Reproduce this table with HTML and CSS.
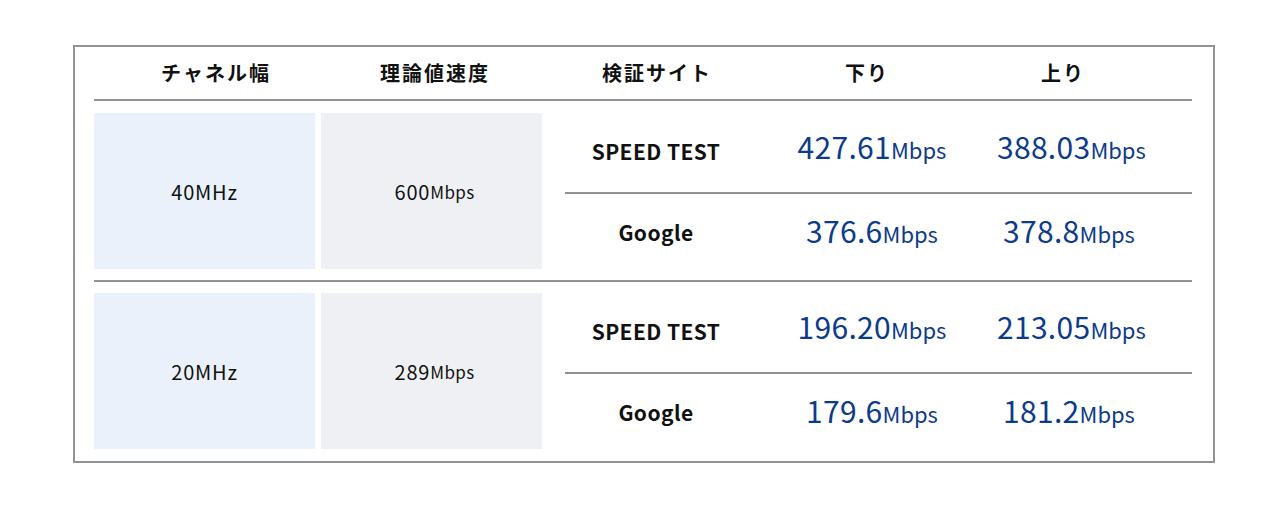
FILE: index.html
```html
<!DOCTYPE html>
<html lang="ja">
<head>
<meta charset="utf-8">
<title>速度比較</title>
<link rel="stylesheet" href="styles.css">
</head>
<body>
<div class="box">
  <div class="head">
    <div class="hcell">チャネル幅</div>
    <div class="hcell">理論値速度</div>
    <div class="hcell">検証サイト</div>
    <div class="hcell">下り</div>
    <div class="hcell">上り</div>
  </div>
  <div class="group first">
    <div class="cell ch">40MHz</div>
    <div class="cell th">600<span class="u">Mbps</span></div>
    <div class="sites">
      <div class="sub top">
        <div class="site">SPEED TEST</div>
        <div class="val down">427.61<span class="u">Mbps</span></div>
        <div class="val up">388.03<span class="u">Mbps</span></div>
      </div>
      <div class="sub bottom">
        <div class="site">Google</div>
        <div class="val down">376.6<span class="u">Mbps</span></div>
        <div class="val up">378.8<span class="u">Mbps</span></div>
      </div>
    </div>
  </div>
  <div class="group second">
    <div class="cell ch">20MHz</div>
    <div class="cell th">289<span class="u">Mbps</span></div>
    <div class="sites">
      <div class="sub top">
        <div class="site">SPEED TEST</div>
        <div class="val down">196.20<span class="u">Mbps</span></div>
        <div class="val up">213.05<span class="u">Mbps</span></div>
      </div>
      <div class="sub bottom">
        <div class="site">Google</div>
        <div class="val down">179.6<span class="u">Mbps</span></div>
        <div class="val up">181.2<span class="u">Mbps</span></div>
      </div>
    </div>
  </div>
</div>
</body>
</html>
```
FILE: styles.css
```css
html, body {
  margin: 0;
  padding: 0;
  background: #ffffff;
}
body {
  font-family: "Noto Sans CJK JP", "Noto Sans", sans-serif;
  color: #111111;
}
.box {
  box-sizing: border-box;
  width: 1142px;
  height: 418px;
  margin: 45px 0 0 73px;
  border: 2px solid #8f9295;
  padding: 0 21px 0 19px;
}
.head {
  display: grid;
  grid-template-columns: 242px 196px 248px 172px 220px;
  height: 52px;
  align-items: center;
  border-bottom: 2px solid #8f9295;
}
.hcell {
  text-align: center;
  font-size: 20px;
  font-weight: 700;
  letter-spacing: 0.1em;
  text-indent: 0.1em;
  line-height: 1;
}
.group {
  display: grid;
  grid-template-columns: 221px 221px 644px;
  column-gap: 6px;
  box-sizing: border-box;
}
.group.first {
  height: 181px;
  padding: 12px 0 11px;
  border-bottom: 2px solid #8f9295;
}
.group.second {
  height: 179px;
  padding: 11px 0 12px;
}
.sites {
  margin-left: 17px;
  display: flex;
  flex-direction: column;
}
.cell {
  display: flex;
  align-items: center;
  justify-content: center;
  font-size: 20px;
  letter-spacing: 0.04em;
}
.cell.ch { background: #eaf1fb; }
.cell.th {
  background: #eff0f4;
  padding-left: 6px;
}
.cell .u {
  font-size: 17px;
  letter-spacing: 0.02em;
}
.sub {
  display: grid;
  grid-template-columns: 182px 250px 144px;
  align-items: center;
  box-sizing: border-box;
}
.sub.top {
  height: 81px;
  padding-bottom: 4px;
  border-bottom: 2px solid #8f9295;
}
.sub.bottom {
  height: 75px;
}
.site {
  text-align: center;
  font-size: 21px;
  font-weight: 700;
  letter-spacing: 0.02em;
}
.val {
  text-align: center;
  color: #0d3b8c;
  font-size: 30px;
  line-height: 1;
  letter-spacing: 0.01em;
  white-space: nowrap;
  margin-bottom: 10px;
}
.sub.bottom .val {
  margin-bottom: 4px;
}
.val .u {
  font-size: 22px;
  letter-spacing: 0;
}
```
